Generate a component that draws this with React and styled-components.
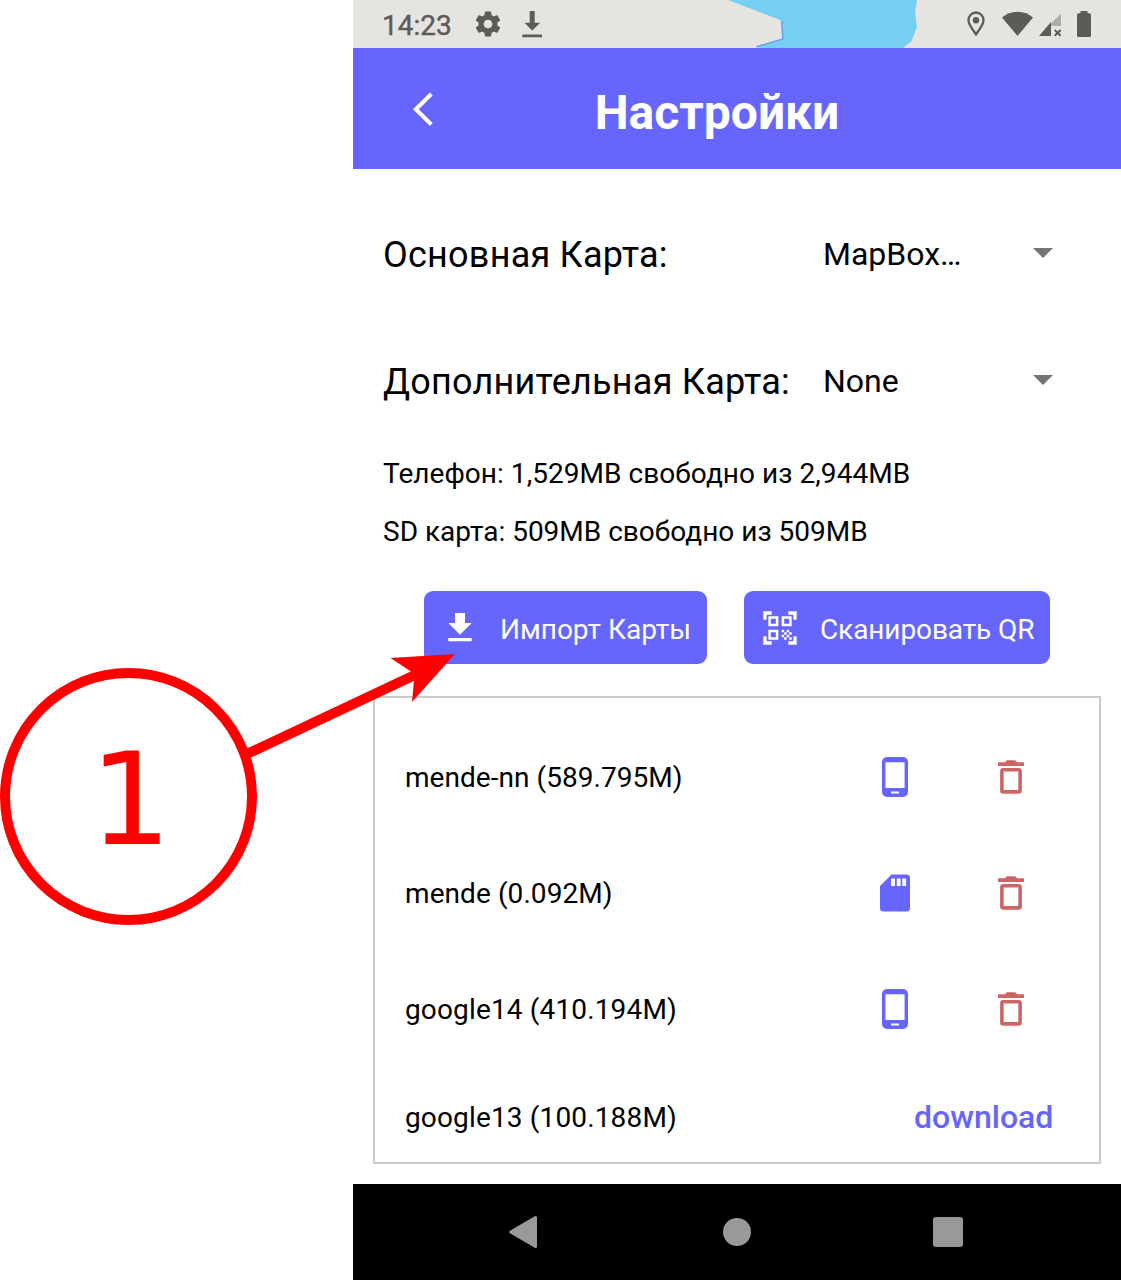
import React from "react";
import styled, { createGlobalStyle } from "styled-components";
import { MdQrCodeScanner } from "react-icons/md";

const ACCENT = "#6666ff";
const DANGER = "#cc6666";
const STATUS = "#5c5b58";

const GlobalStyle = createGlobalStyle`
  *, *::before, *::after { box-sizing: border-box; }
  body { margin: 0; background: #fff; }
  svg { display: block; flex: none; }
`;

const Page = styled.div`
  position: relative;
  display: flex;
  justify-content: flex-end;
  width: 1121px;
  height: 1280px;
  overflow: hidden;
  font-family: Roboto, "Noto Sans", sans-serif;
  color: #000;
`;

const Phone = styled.div`
  display: flex;
  flex-direction: column;
  width: 768px;
  height: 1280px;
  background: #fff;
`;

const StatusBar = styled.div`
  position: relative;
  display: flex;
  justify-content: space-between;
  height: 48px;
  padding: 0 29px 0 29px;
  background: #e5e4e0;
`;

const MapBackdrop = styled.svg`
  position: absolute;
  left: 0;
  top: 0;
`;

const StatusGroup = styled.div`
  position: relative;
  display: flex;
  align-items: center;
`;

const Clock = styled.span`
  width: 93px;
  padding-top: 3px;
  font-size: 28px;
  font-weight: 400;
  line-height: 48px;
  color: ${STATUS};
  -webkit-text-stroke: 0.4px ${STATUS};
`;

const Header = styled.header`
  display: grid;
  grid-template-columns: 126px 476px 1fr;
  align-items: center;
  height: 121px;
  background: ${ACCENT};
`;

const BackButton = styled.button`
  display: flex;
  justify-content: flex-end;
  padding: 0 45px 0 0;
  border: 0;
  background: none;
`;

const Title = styled.h1`
  margin: 0;
  padding-top: 8px;
  font-size: 48px;
  font-weight: 700;
  line-height: 56px;
  text-align: center;
  color: #fff;
`;

const Main = styled.main`
  flex: 1;
  padding: 22px 20px 20px;
`;

const SettingRow = styled.div`
  display: flex;
  align-items: center;
  height: 127px;
  padding: 0 48px 0 10px;
`;

const SettingLabel = styled.span`
  width: 440px;
  font-size: 36px;
  letter-spacing: 0.23px;
  white-space: nowrap;
`;

const Select = styled.div`
  flex: 1;
  display: flex;
  align-items: center;
  justify-content: space-between;
  font-size: 32px;
  line-height: 38px;
  padding-bottom: 2px;
`;

const Caret = styled.i`
  border: 10px solid transparent;
  border-top-color: #757575;
  border-bottom: 0;
  margin-top: -1px;
`;

const Info = styled.p`
  margin: 0;
  padding-left: 10px;
  font-size: 28px;
  line-height: 58px;
  letter-spacing: ${(p) => p.$tracking || 0}px;
  white-space: nowrap;
`;

const Actions = styled.div`
  display: flex;
  gap: 37px;
  margin: 30px 0 32px;
  padding-left: 51px;
`;

const ActionButton = styled.button`
  display: flex;
  align-items: center;
  width: ${(p) => p.$width}px;
  height: 73px;
  padding: 0 0 0 16px;
  border: 0;
  border-radius: 9px;
  background: ${ACCENT};
  color: #fff;
  font-family: inherit;
  font-size: 28px;
  white-space: nowrap;

  svg {
    margin-top: 1px;
  }
`;

const ActionText = styled.span`
  padding-top: 3px;
  margin-left: 20px;
  letter-spacing: ${(p) => p.$tracking || 0}px;
`;

const MapList = styled.section`
  height: 468px;
  padding-top: 21px;
  border: 2px solid #cacaca;
`;

const MapRow = styled.div`
  display: flex;
  align-items: center;
  height: ${(p) => (p.$last ? 100 : 116)}px;
  padding-left: 30px;
  font-size: 28px;
`;

const MapName = styled.span`
  flex: none;
  width: 470px;
  letter-spacing: ${(p) => p.$tracking}px;
  white-space: nowrap;
`;

const IconCell = styled.span`
  flex: none;
  display: flex;
  justify-content: center;
  width: ${(p) => p.$width}px;
`;

const DownloadLink = styled.span`
  margin-left: 39px;
  font-size: 32px;
  font-weight: 500;
  color: ${ACCENT};
`;

const NavBar = styled.nav`
  height: 96px;
  display: flex;
  align-items: center;
  padding-left: 155px;
  background: #000;
`;

const HomeDot = styled.span`
  width: 28px;
  height: 28px;
  margin: 0 182px 0 186px;
  border-radius: 50%;
  background: #999;
`;

const RecentSquare = styled.span`
  width: 30px;
  height: 30px;
  border-radius: 3px;
  background: #999;
`;

const Callout = styled.div`
  position: absolute;
  left: 0;
  top: 668px;
  width: 257px;
  height: 257px;
  padding: 0 0 0 4px;
  border: 10px solid #f00;
  border-radius: 50%;
  font-family: "DejaVu Sans", sans-serif;
  font-size: 129px;
  line-height: 243px;
  text-align: center;
  color: #f00;
`;

const Arrow = styled.svg`
  position: absolute;
  left: 240px;
  top: 650px;
`;

function PhoneIcon() {
  return (
    <svg width="26" height="40" viewBox="0 0 26 40">
      <path
        fill={ACCENT}
        fillRule="evenodd"
        d="M5 0h16a5 5 0 0 1 5 5v30a5 5 0 0 1-5 5H5a5 5 0 0 1-5-5V5a5 5 0 0 1 5-5zM3.400 5.300v25.700h19.200v-25.700zM9 34.400v2.200h8v-2.200z"
      />
    </svg>
  );
}

function SdIcon() {
  return (
    <svg width="30" height="38" viewBox="0 0 30 38">
      <path
        fill={ACCENT}
        fillRule="evenodd"
        d="M11.500.5H26.500a3.500 3.500 0 0 1 3.500 3.500V34a3.500 3.500 0 0 1-3.500 3.500H3.500A3.500 3.500 0 0 1 0 34V12zM11 4.500v7.500h4V4.500zM16.800 4.500v7.500h3.800V4.500zM22.300 4.500v7.500h3.800V4.500z"
      />
    </svg>
  );
}

function TrashIcon() {
  return (
    <svg width="26" height="34" viewBox="0 0 26 34">
      <path fill={DANGER} d="M0 2.200h6.700L8.800.3h8.400L19.300 2.200H26v3.800H0z" />
      <rect x="3.900" y="9.700" width="18.200" height="22.200" rx="1.500" fill="none" stroke={DANGER} strokeWidth="3.600" />
    </svg>
  );
}

function StatusIcons() {
  return (
    <svg width="126" height="48" viewBox="966 0 126 48" fill={STATUS}>
      <path
        fill="none"
        stroke={STATUS}
        strokeWidth="2.300"
        d="M976 34.300c-3.200-4.600-7.500-9.500-7.500-14 0-4.500 3.300-7.800 7.500-7.800s7.500 3.300 7.500 7.800c0 4.500-4.300 9.400-7.500 14z"
      />
      <circle cx="976" cy="20.300" r="3.200" />
      <path d="M1017.500 36L1002 17.600C1006 14 1011.500 11.800 1017.500 11.800S1029 14 1033 17.600z" />
      <path d="M1051 22v14h-12z" />
      <path fill="#adaca9" d="M1061 13.500V26h-10V23.500z" />
      <path fill="none" stroke={STATUS} strokeWidth="1.900" d="M1054.700 30l6 5.800m0-5.800l-6 5.800" />
      <path d="M1080.500 11h7v2.300h2a1.500 1.500 0 0 1 1.500 1.500V35.500a1.500 1.500 0 0 1-1.500 1.500h-11a1.500 1.500 0 0 1-1.500-1.500V14.800a1.500 1.500 0 0 1 1.500-1.500H1080.500z" />
    </svg>
  );
}

const maps = [
  { name: "mende-nn (589.795M)", storage: "phone", tracking: 0.05 },
  { name: "mende (0.092M)", storage: "sd", tracking: 0.08 },
  { name: "google14 (410.194M)", storage: "phone", tracking: 0.15 },
  { name: "google13 (100.188M)", storage: null, tracking: 0.15 },
];

export default function App() {
  return (
    <Page>
      <GlobalStyle />
      <Phone>
        <StatusBar>
          <MapBackdrop width="768" height="48" viewBox="353 0 768 48">
            <path fill="#76cff2" d="M728 0L781.500 20.500L782.500 39L756 47L760 48H903L911.500 41L917 27L915 12L917 0z" />
            <path fill="none" stroke="#6a9ff0" strokeWidth="1.500" d="M781.700 20.500L782.800 39L756.500 46.800" />
          </MapBackdrop>
          <StatusGroup>
            <Clock>14:23</Clock>
            <svg width="68" height="48" viewBox="475 0 68 48" fill={STATUS}>
              <path
                transform="translate(473 9) scale(1.25)"
                d="M19.430 12.980c.04-.32.07-.64.07-.98s-.03-.66-.07-.98l2.110-1.650c.19-.15.24-.42.12-.64l-2-3.460c-.12-.22-.39-.3-.61-.22l-2.490 1c-.52-.4-1.080-.73-1.690-.98l-.38-2.650C14.460 2.180 14.250 2 14 2h-4c-.25 0-.46.18-.49.42l-.38 2.650c-.61.25-1.170.59-1.690.98l-2.490-1c-.23-.09-.49 0-.61.22l-2 3.460c-.13.22-.07.49.12.64l2.110 1.650c-.04.32-.07.65-.07.98s.03.66.07.98l-2.110 1.650c-.19.15-.24.42-.12.64l2 3.460c.12.22.39.3.61.22l2.490-1c.52.4 1.080.73 1.690.98l.38 2.650c.03.24.24.42.49.42h4c.25 0 .46-.18.49-.42l.38-2.650c.61-.25 1.170-.59 1.690-.98l2.490 1c.23.09.49 0 .61-.22l2-3.460c.12-.22.07-.49-.12-.64l-2.110-1.650zM12 15.500c-1.930 0-3.500-1.570-3.500-3.500s1.570-3.500 3.500-3.500 3.500 1.570 3.500 3.500-1.570 3.500-3.500 3.500z"
              />
              <path d="M529.700 11h5v11.700h5.600L532.200 30.500L524.500 22.700h5.200zM522.300 34.500h19.700v2.700h-19.700z" />
            </svg>
          </StatusGroup>
          <StatusGroup>
            <StatusIcons />
          </StatusGroup>
        </StatusBar>

        <Header>
          <BackButton aria-label="Назад">
            <svg width="22" height="36" viewBox="0 0 22 36">
              <path fill="none" stroke="#fff" strokeWidth="4" d="M19.300 3L3.800 18.200L19.300 33.500" />
            </svg>
          </BackButton>
          <Title>Настройки</Title>
        </Header>

        <Main>
          <SettingRow>
            <SettingLabel>Основная Карта:</SettingLabel>
            <Select>
              MapBox…
              <Caret />
            </Select>
          </SettingRow>
          <SettingRow>
            <SettingLabel>Дополнительная Карта:</SettingLabel>
            <Select>
              None
              <Caret />
            </Select>
          </SettingRow>
          <Info $tracking={0.05}>Телефон: 1,529MB свободно из 2,944MB</Info>
          <Info>SD карта: 509MB свободно из 509MB</Info>

          <Actions>
            <ActionButton $width={283}>
              <svg width="40" height="40" viewBox="0 0 24 24" fill="#fff">
                <path d="M19 9h-4V3H9v6H5l7 7 7-7zM5 18v2h14v-2H5z" />
              </svg>
              <ActionText>Импорт Карты</ActionText>
            </ActionButton>
            <ActionButton $width={306}>
              <MdQrCodeScanner size={40} />
              <ActionText $tracking={-0.1}>Сканировать QR</ActionText>
            </ActionButton>
          </Actions>

          <MapList>
            {maps.map((m) => (
              <MapRow key={m.name} $last={!m.storage}>
                <MapName $tracking={m.tracking}>{m.name}</MapName>
                {m.storage ? (
                  <>
                    <IconCell $width={40}>{m.storage === "sd" ? <SdIcon /> : <PhoneIcon />}</IconCell>
                    <IconCell $width={192}>
                      <TrashIcon />
                    </IconCell>
                  </>
                ) : (
                  <DownloadLink>download</DownloadLink>
                )}
              </MapRow>
            ))}
          </MapList>
        </Main>

        <NavBar>
          <svg width="29" height="34" viewBox="0 0 29 34">
            <path fill="#999" stroke="#999" strokeWidth="3" strokeLinejoin="round" d="M2.700 17L27.500 2.500V31.500z" />
          </svg>
          <HomeDot />
          <RecentSquare />
        </NavBar>
      </Phone>

      <Callout>1</Callout>
      <Arrow width="220" height="120" viewBox="240 650 220 120">
        <path stroke="#f00" strokeWidth="10" d="M248 753.500L418 673.500" />
        <path fill="#f00" d="M455 654L390.500 658L411 671.500L414 680L412 702z" />
      </Arrow>
    </Page>
  );
}
